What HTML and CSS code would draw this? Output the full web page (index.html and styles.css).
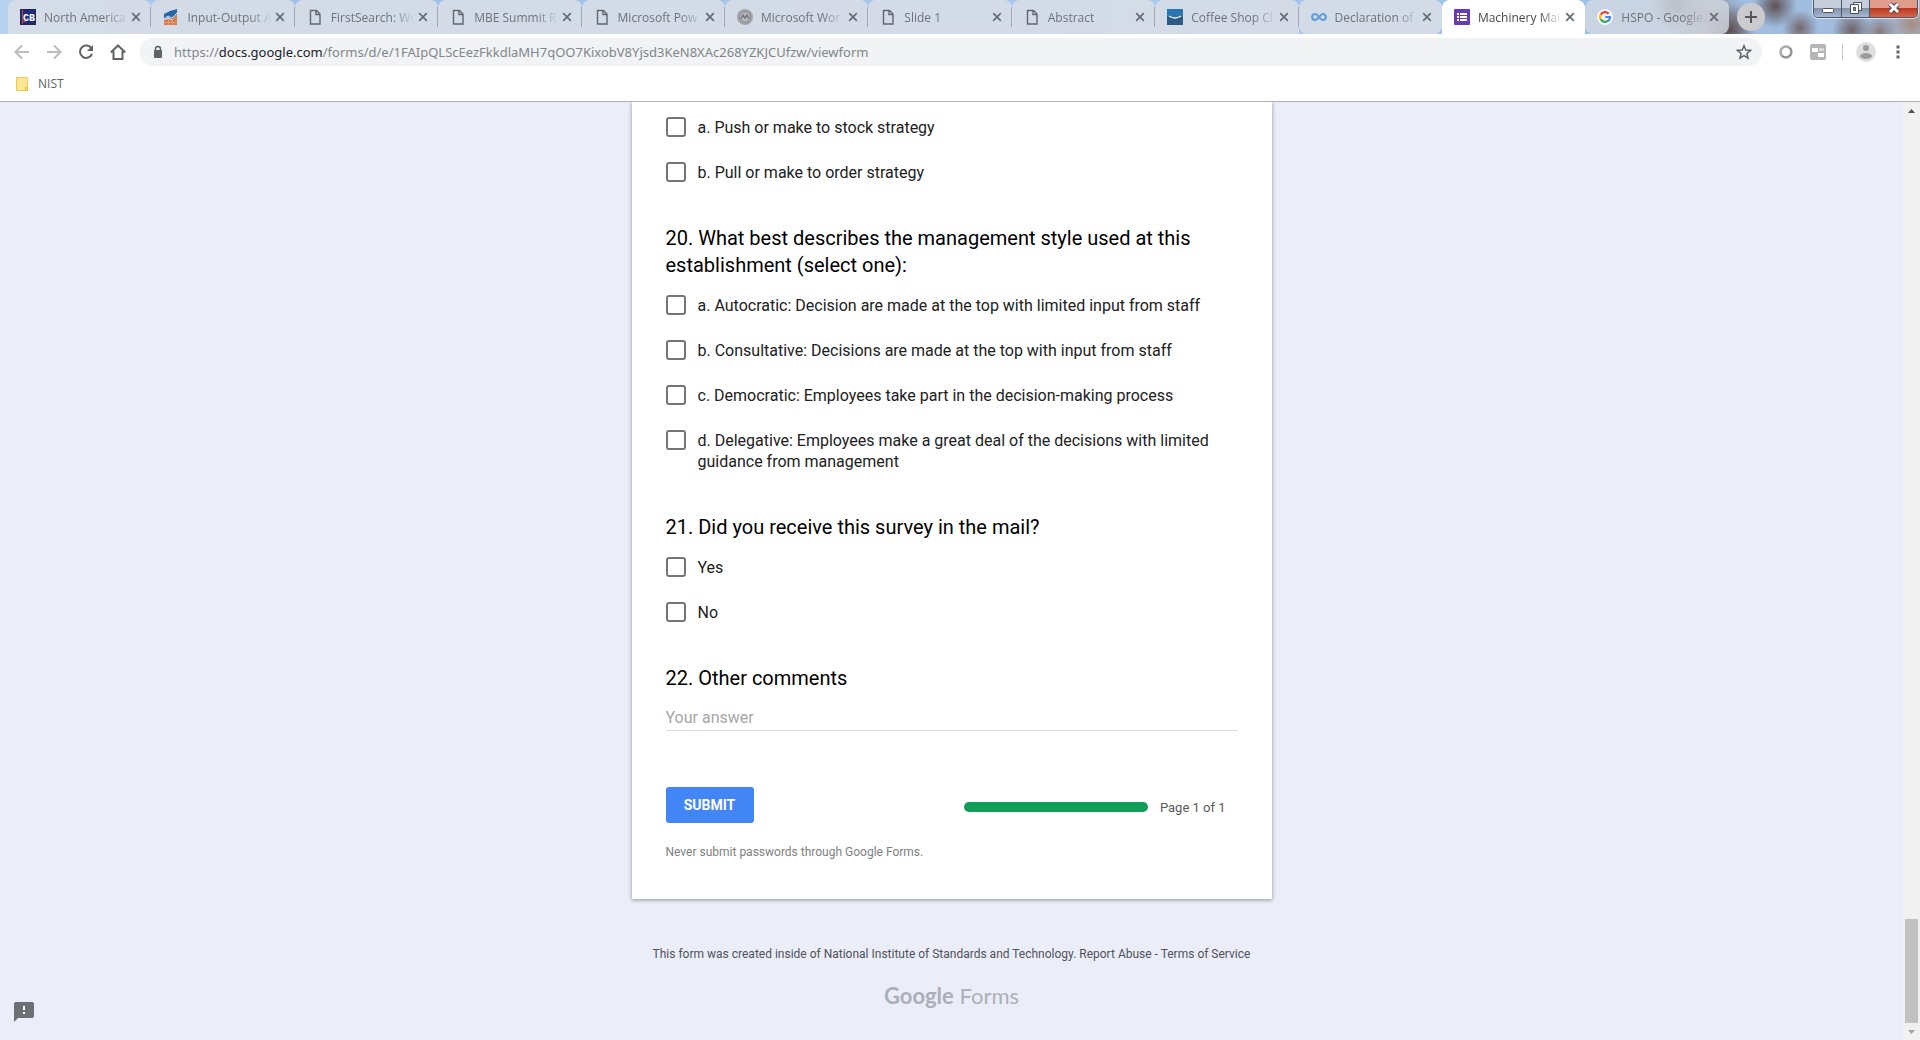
FILE: index.html
```html
<!doctype html>
<html lang="en">
<head>
    <title>Machinery Maintenance Survey</title>
    <meta charset="utf-8">
    <link rel="stylesheet" href="styles.css">
</head>
<body>
    <svg class="defs" aria-hidden="true">
        <symbol id="icon-page" viewBox="0 0 16 16"><path d="M3.5 1.5h6l3.500 3.500v10h-9.500zM9 1.500v4h4" fill="none" stroke="currentColor" stroke-width="1.400"/></symbol>
        <symbol id="icon-close" viewBox="0 0 10 10"><path d="M1.200 1.200l7.600 7.600M8.800 1.200L1.200 8.800" stroke="currentColor" stroke-width="1.700"/></symbol>
    </svg>

    <nav class="tabs" aria-label="Tabs">
        <div class="tab">
            <svg class="favicon" viewBox="0 0 16 16"><path fill="#1d2a80" d="M0 0h16v16H0z"/><path d="M.5.5h15v15H.5z" fill="none" stroke="#29292f" stroke-dasharray="2 1"/><path fill="#d33" d="M2 1h1v14H2zM2 12h4v1H2z"/><text x="3" y="12" class="cb">CB</text></svg>
            <a href="#">North America</a>
            <button aria-label="Close"><svg><use href="#icon-close"/></svg></button>
        </div>
        <div class="tab">
            <svg class="favicon" viewBox="0 0 16 16"><path fill="#dc7a43" d="M1 11l4-1 4 1 5-6v11H1z"/><path fill="#2467a8" d="M1 5l6-3 7-2v5l-5 5-4-2-4 2z"/><path d="M1 10l4-3 4 2 5-5" fill="none" stroke="#d6dce7"/><path d="M5.500 11v5M9.500 10v6M1 13.500h13" fill="none" stroke="#e9b291" stroke-width=".6"/></svg>
            <a href="#">Input-Output A</a>
            <button aria-label="Close"><svg><use href="#icon-close"/></svg></button>
        </div>
        <div class="tab">
            <svg class="favicon"><use href="#icon-page"/></svg>
            <a href="#">FirstSearch: Wo</a>
            <button aria-label="Close"><svg><use href="#icon-close"/></svg></button>
        </div>
        <div class="tab">
            <svg class="favicon"><use href="#icon-page"/></svg>
            <a href="#">MBE Summit R</a>
            <button aria-label="Close"><svg><use href="#icon-close"/></svg></button>
        </div>
        <div class="tab">
            <svg class="favicon"><use href="#icon-page"/></svg>
            <a href="#">Microsoft Pow</a>
            <button aria-label="Close"><svg><use href="#icon-close"/></svg></button>
        </div>
        <div class="tab">
            <svg class="favicon" viewBox="0 0 16 16"><circle cx="8" cy="8" r="8" fill="#a3a5aa"/><circle cx="8" cy="8" r="5.500" fill="#b4b6ba" stroke="#888a8f"/><path d="M4 10l2-4 2 3 2-3 2 4" fill="none" stroke="#73757a" stroke-width="1.300"/></svg>
            <a href="#">Microsoft Wor</a>
            <button aria-label="Close"><svg><use href="#icon-close"/></svg></button>
        </div>
        <div class="tab">
            <svg class="favicon"><use href="#icon-page"/></svg>
            <a href="#">Slide 1</a>
            <button aria-label="Close"><svg><use href="#icon-close"/></svg></button>
        </div>
        <div class="tab">
            <svg class="favicon"><use href="#icon-page"/></svg>
            <a href="#">Abstract</a>
            <button aria-label="Close"><svg><use href="#icon-close"/></svg></button>
        </div>
        <div class="tab">
            <svg class="favicon" viewBox="0 0 16 16"><path fill="#2a75ad" d="M0 0h16v8H0z"/><path fill="#2d5b86" d="M0 8h16v8H0z"/><path d="M2 7q6 4 12 0" fill="none" stroke="#e9f3fa" stroke-width="1.400"/></svg>
            <a href="#">Coffee Shop Cl</a>
            <button aria-label="Close"><svg><use href="#icon-close"/></svg></button>
        </div>
        <div class="tab before-active">
            <svg class="favicon" viewBox="0 0 16 16"><path d="M8 8C6.500 5.800 5.500 5 4.200 5a3 3 0 0 0 0 6C6.500 11 9.500 5 11.800 5a3 3 0 0 1 0 6C10.500 11 9.500 10.200 8 8z" fill="none" stroke="#5f9fdb" stroke-width="2.200"/></svg>
            <a href="#">Declaration of</a>
            <button aria-label="Close"><svg><use href="#icon-close"/></svg></button>
        </div>
        <div class="tab active">
            <svg class="favicon" viewBox="0 0 16 16"><rect width="16" height="16" rx="1" fill="#673ab7"/><path fill="#fff" d="M3 4h2v2H3zM6 4h7v2H6zM3 7h2v2H3zM6 7h7v2H6zM3 10h2v2H3zM6 10h7v2H6z"/></svg>
            <a href="#">Machinery Mai</a>
            <button aria-label="Close"><svg><use href="#icon-close"/></svg></button>
        </div>
        <div class="tab last">
            <svg class="favicon" viewBox="0 0 16 16"><circle cx="8" cy="8" r="8" fill="#f4f6f9"/><g fill="none" stroke-width="2.200"><path d="M11.600 4.600A5 5 0 0 0 3.700 5.700" stroke="#ea4335"/><path d="M3.700 5.500a5 5 0 0 0 0 5" stroke="#fbbc05"/><path d="M3.700 10.300a5 5 0 0 0 7.600 1.400" stroke="#34a853"/><path d="M11.200 11.800A5 5 0 0 0 13 8H8.200" stroke="#4285f4"/></g></svg>
            <a href="#">HSPO - Google</a>
            <button aria-label="Close"><svg><use href="#icon-close"/></svg></button>
        </div>
        <button class="new-tab" aria-label="New tab"><svg viewBox="0 0 12 12"><path d="M6 0v12M0 6h12" stroke="#55575b" stroke-width="2"/></svg></button>
        <div class="window-buttons">
            <button aria-label="Minimize"><svg viewBox="0 0 16 16"><rect x="2.500" y="8.500" width="11" height="4" rx="1" fill="#fff" stroke="#4b5264"/></svg></button>
            <button aria-label="Restore"><svg viewBox="0 0 16 16"><path d="M5.500 2.500h8v8h-8z" fill="#fff" stroke="#4b5264"/><path d="M2.500 4.500h8v9h-8z" fill="#fff" stroke="#4b5264"/><path d="M5.500 7.500h2v3h-2z" fill="#8fa3c0" stroke="#4b5264"/></svg></button>
            <button class="quit" aria-label="Close window"><svg viewBox="0 0 16 16"><path d="M4 4l8 8M12 4l-8 8" stroke="#4f4350" stroke-width="5"/><path d="M4 4l8 8M12 4l-8 8" stroke="#fff" stroke-width="3"/></svg></button>
        </div>
    </nav>

    <div class="toolbar">
        <button class="off" aria-label="Back"><svg viewBox="0 0 16 16"><path d="M15 8H2M8 1.500L1.500 8 8 14.500"/></svg></button>
        <button class="off" aria-label="Forward"><svg viewBox="0 0 16 16"><path d="M1 8h13M8 1.500L14.500 8 8 14.500"/></svg></button>
        <button aria-label="Reload"><svg viewBox="0 0 16 16"><path d="M13.500 4.500A6.200 6.200 0 1 0 14 9.800"/><path d="M15 1v6H9z" class="solid"/></svg></button>
        <button aria-label="Home"><svg viewBox="0 0 16 16"><path d="M.8 8.500L8 1.500l7.200 7M3.500 7v8h9V7"/></svg></button>
        <div class="omnibox">
            <svg class="lock" viewBox="0 0 10 14"><path d="M2.500 6V4a2.500 2.500 0 0 1 5 0v2" fill="none" stroke="#5f6368" stroke-width="1.500"/><rect x="1" y="5" width="8" height="8" rx="1" fill="#5f6368"/></svg>
            <p class="url">https://<b>docs.google.com</b>/forms/d/e/1FAIpQLScEezFkkdlaMH7qOO7KixobV8Yjsd3KeN8XAc268YZKJCUfzw/viewform</p>
            <button aria-label="Bookmark"><svg viewBox="0 0 16 16"><path class="star" d="M8 1.800l1.800 4.300 4.700.4-3.600 3 1.100 4.600L8 11.600l-4 2.500 1.100-4.600-3.600-3 4.700-.4z"/></svg></button>
        </div>
        <button class="ext" aria-label="Cisco WebEx"><svg viewBox="0 0 16 16"><circle cx="8" cy="8" r="5.500" fill="none" stroke="#aaa" stroke-width="2.500"/><path d="M3.500 12.500a6.400 6.400 0 0 0 9-9l-1 1a5 5 0 0 1-7 7z" fill="#888"/></svg></button>
        <button class="ext" aria-label="Extension"><svg viewBox="0 0 16 16"><rect width="16" height="16" rx="2" fill="#b5b5b5"/><path fill="#fff" d="M2 4h6v4H2zM8 9h6v4H8z"/><path fill="#d9d9d9" d="M9 4h5v3H9z"/></svg></button>
        <span class="split"></span>
        <button class="avatar" aria-label="Profile"><svg viewBox="0 0 20 20"><circle cx="10" cy="10" r="10" fill="#dedede"/><circle cx="10" cy="6" r="3" fill="#9b9b9b"/><ellipse cx="10" cy="14" rx="6" ry="3" fill="#9b9b9b"/></svg></button>
        <button class="menu" aria-label="Menu"><svg viewBox="0 0 4 14"><path d="M.5.5h3v3h-3zM.5 5.500h3v3h-3zM.5 10.500h3v3h-3z" fill="#5f6368"/></svg></button>
    </div>

    <div class="bookmarks">
        <svg viewBox="0 0 12 14"><path d="M.5.5h11v13H.5z" fill="#ffe694" stroke="#eccb55"/><path d="M9.500 10.500h2v3h-2z" fill="#ffe694" stroke="#e3b93a"/></svg>
        <a href="#">NIST</a>
    </div>

    <div class="view">
        <main class="page">
            <form class="card">
                <fieldset>
                    <label class="option"><input type="checkbox"><span>a. Push or make to stock strategy</span></label>
                    <label class="option"><input type="checkbox"><span>b. Pull or make to order strategy</span></label>
                </fieldset>
                <fieldset>
                    <legend>20. What best describes the management style used at this establishment (select one):</legend>
                    <label class="option"><input type="checkbox"><span>a. Autocratic: Decision are made at the top with limited input from staff</span></label>
                    <label class="option"><input type="checkbox"><span>b. Consultative: Decisions are made at the top with input from staff</span></label>
                    <label class="option"><input type="checkbox"><span>c. Democratic: Employees take part in the decision-making process</span></label>
                    <label class="option"><input type="checkbox"><span>d. Delegative: Employees make a great deal of the decisions with limited guidance from management</span></label>
                </fieldset>
                <fieldset>
                    <legend>21. Did you receive this survey in the mail?</legend>
                    <label class="option"><input type="checkbox"><span>Yes</span></label>
                    <label class="option"><input type="checkbox"><span>No</span></label>
                </fieldset>
                <div class="comments">
                    <label for="comments">22. Other comments</label>
                    <input type="text" id="comments" placeholder="Your answer">
                </div>
                <div class="actions">
                    <button type="button" class="submit">SUBMIT</button>
                    <div class="progress">
                        <span class="bar"></span>
                        <span>Page 1 of 1</span>
                    </div>
                </div>
                <p class="warning">Never submit passwords through Google Forms.</p>
            </form>
            <footer>
                <p>This form was created inside of National Institute of Standards and Technology. <a href="#">Report Abuse</a> - <a href="#">Terms of Service</a></p>
                <a class="logo" href="#"><b>Google</b> Forms</a>
            </footer>
            <button class="report" aria-label="Report a problem"><svg viewBox="0 0 20 20"><path d="M2 0h16a2 2 0 0 1 2 2v12a2 2 0 0 1-2 2H4l-4 4V2a2 2 0 0 1 2-2z" fill="#6e6f75"/><path d="M9 4h2v4H9zM9 10h2v2H9z" fill="#fff"/></svg></button>
        </main>
        <div class="scrollbar">
            <svg viewBox="0 0 17 17"><path d="M5 11l3.500-4L12 11z" fill="#505050"/></svg>
            <div class="track"><div class="thumb"></div></div>
            <svg viewBox="0 0 17 17"><path d="M5 7l3.500 4L12 7z" fill="#a3a3a3"/></svg>
        </div>
    </div>
</body>
</html>
```
FILE: styles.css
```css
* {
    margin: 0;
    padding: 0;
    box-sizing: border-box;
}

body {
    display: flex;
    flex-direction: column;
    height: 100vh;
    overflow: hidden;
    background: #fff;
    font-family: Roboto, sans-serif;
    color: #212121;
}

button {
    border: none;
    background: none;
    cursor: pointer;
}

a {
    color: inherit;
    text-decoration: none;
}

svg {
    display: block;
}

.defs {
    display: none;
}

/* tab strip */
.tabs {
    display: flex;
    height: 34px;
    padding-left: 8px;
    background:
        radial-gradient(circle at right 190px top 30px, #5b4f50 0, transparent 26px),
        radial-gradient(circle at right 145px top 6px, #5c5152 0, transparent 22px),
        radial-gradient(circle at right 120px top 28px, #75676a 0, transparent 18px),
        radial-gradient(circle at right 68px top 30px, #6d6265 0, transparent 20px),
        radial-gradient(circle at right 40px top 32px, #877a7b 0, transparent 18px),
        radial-gradient(circle at right 8px top 24px, #a58f82 0, transparent 26px),
        radial-gradient(circle at right 245px top 4px, #5e5a60 0, transparent 26px),
        radial-gradient(circle at right 215px top 20px, #8b8284 0, transparent 44px),
        linear-gradient(to right, #b5d3ef 0, #9fbfe8 12%, #a8caf0 60%, #9cbfe6 84%, #a4bcdc 100%);
    font-family: "Open Sans", sans-serif;
    font-size: 12px;
}

.tab {
    flex: 0 1 7.5%;
    display: flex;
    align-items: center;
    padding: 0 10px 0 12px;
    min-width: 0;
    border-radius: 8px 8px 0 0;
    background: rgba(214, 220, 231, 0.95);
    color: #6e737b;
    position: relative;
}

.tab::after {
    content: '';
    position: absolute;
    right: 0;
    top: 7px;
    width: 1px;
    height: 20px;
    background: #a1a8b3;
}

.tab.active::after,
.tab.before-active::after,
.tab.last::after {
    display: none;
}

.tab.active {
    background: #fff;
    color: #45494d;
}

.tab.before-active {
    border-radius: 8px;
}

.tab.last {
    border-radius: 8px;
    background: rgba(212, 217, 226, 0.8);
}

.favicon {
    flex: none;
    width: 16px;
    height: 16px;
    color: #62676f;
}

.cb {
    font: bold 10px "Liberation Mono", monospace;
    fill: #fff;
}

.tab a {
    flex: 1;
    min-width: 0;
    margin: 0 0 0 8px;
    white-space: nowrap;
    -webkit-mask-image: linear-gradient(to right, #000 70%, transparent 97%);
    mask-image: linear-gradient(to right, #000 70%, transparent 97%);
}

.tab button svg {
    width: 10px;
    height: 10px;
    color: #666c74;
}

.new-tab {
    display: flex;
    align-items: center;
    justify-content: center;
    width: 28px;
    height: 28px;
    margin: 3px 0 0 8px;
    border-radius: 50%;
    background: #cbcbce;
}

.new-tab svg {
    width: 12px;
}

.window-buttons {
    display: flex;
    height: 18px;
    margin: 0 2px 0 auto;
    border: 1px solid #4e566a;
    border-top: none;
    border-radius: 0 0 5px 5px;
    overflow: hidden;
    box-shadow: 0 0 0 1px rgba(255, 255, 255, 0.6);
}

.window-buttons button {
    display: flex;
    justify-content: center;
    width: 28px;
    border-right: 1px solid #4e566a;
    background: linear-gradient(#c6cedc 45%, #8391aa 50%, #a9b9d3);
}

.window-buttons .quit {
    width: 47px;
    border-right: none;
    background: linear-gradient(#dd9c8c 45%, #b93a22 50%, #d8664a);
}

.window-buttons svg {
    width: 16px;
    height: 16px;
}

/* address bar */
.toolbar {
    display: flex;
    align-items: center;
    height: 36px;
    padding: 0 6px;
}

.toolbar button {
    display: flex;
    align-items: center;
    justify-content: center;
    width: 32px;
    height: 28px;
}

.toolbar svg {
    width: 16px;
    height: 16px;
    fill: none;
    stroke: #5f6368;
    stroke-width: 2;
}

.toolbar .solid {
    fill: #5f6368;
    stroke: none;
}

.toolbar .off svg {
    stroke: #bbbcbe;
}

.toolbar .star {
    stroke-width: 1.5;
}

.omnibox {
    flex: 1;
    display: flex;
    align-items: center;
    height: 28px;
    margin: 0 8px 0 6px;
    padding: 0 2px 0 13px;
    border-radius: 14px;
    background: #f1f3f4;
}

.toolbar .lock {
    width: 10px;
    height: 14px;
    stroke: none;
}

.url {
    flex: 1;
    margin-left: 11px;
    font-family: "Noto Sans", sans-serif;
    font-size: 13px;
    color: #80868b;
}

.url b {
    font-weight: normal;
    color: #202124;
}

.toolbar .ext svg,
.toolbar .avatar svg,
.toolbar .menu svg {
    stroke: none;
}

.split {
    width: 1px;
    height: 16px;
    margin: 0 7px 0 8px;
    background: #c8c9cb;
}

.toolbar .avatar svg {
    width: 20px;
    height: 20px;
}

.toolbar .menu svg {
    width: 4px;
    height: 14px;
}

.bookmarks {
    display: flex;
    align-items: center;
    gap: 10px;
    height: 32px;
    padding: 0 16px 4px;
    border-bottom: 1px solid #b0b1b5;
    font-family: "Open Sans", sans-serif;
    font-size: 12px;
    color: #5f6368;
}

.bookmarks svg {
    width: 12px;
    height: 14px;
}

/* form */
.view {
    flex: 1;
    display: flex;
    min-height: 0;
}

.page {
    flex: 1;
    position: relative;
    overflow: hidden;
    background: #ebeef8;
}

.card {
    max-width: 640px;
    margin: 0 auto;
    padding: 15px 34px 39px;
    background: #fff;
    box-shadow: 0 1px 4px rgba(0, 0, 0, 0.4);
}

fieldset {
    border: none;
    margin-bottom: 42px;
}

legend,
.comments label {
    display: block;
    margin-bottom: 16px;
    font-size: 20px;
    line-height: 27px;
    color: #000;
}

.option {
    display: flex;
    align-items: flex-start;
    gap: 12px;
    font-size: 16px;
    line-height: 21px;
}

.option + .option {
    margin-top: 24px;
}

.option input {
    flex: none;
    appearance: none;
    width: 20px;
    height: 20px;
    border: 2px solid #757575;
    border-radius: 3px;
}

.comments label {
    margin-bottom: 12px;
}

.comments input {
    display: block;
    width: 100%;
    height: 27px;
    border: none;
    border-bottom: 1px solid #dedede;
    outline: none;
    font-family: inherit;
    font-size: 16px;
}

.comments input::placeholder {
    color: #a6a6a6;
}

.actions {
    display: flex;
    align-items: center;
    justify-content: space-between;
    margin-top: 56px;
}

.submit {
    width: 88px;
    height: 36px;
    border-radius: 3px;
    background: #4285f4;
    color: #fff;
    font-family: inherit;
    font-size: 14px;
    font-weight: bold;
}

.progress {
    display: flex;
    align-items: center;
    gap: 12px;
    padding: 4px 12px 0 0;
    font-size: 13px;
    color: #5a5a5a;
}

.bar {
    width: 184px;
    height: 10px;
    border-radius: 5px;
    background: #109d58;
}

.warning {
    margin-top: 21px;
    font-size: 12px;
    line-height: 16px;
    color: #808080;
}

footer {
    margin-top: 47px;
    text-align: center;
    font-size: 12px;
    line-height: 16px;
    color: #50515a;
}

.logo {
    display: inline-block;
    margin-top: 20px;
    font-family: Lato, sans-serif;
    font-size: 22px;
    line-height: 28px;
    color: #acaeb8;
}

.logo b {
    font-weight: bold;
}

.report {
    position: absolute;
    left: 14px;
    bottom: 18px;
}

.report svg {
    width: 20px;
    height: 20px;
}

.scrollbar {
    display: flex;
    flex-direction: column;
    width: 17px;
    background: #f1f1f1;
}

.track {
    flex: 1;
    display: flex;
    flex-direction: column;
    justify-content: flex-end;
    padding: 0 2px;
}

.thumb {
    height: 11.5%;
    background: #c1c1c1;
}
```
